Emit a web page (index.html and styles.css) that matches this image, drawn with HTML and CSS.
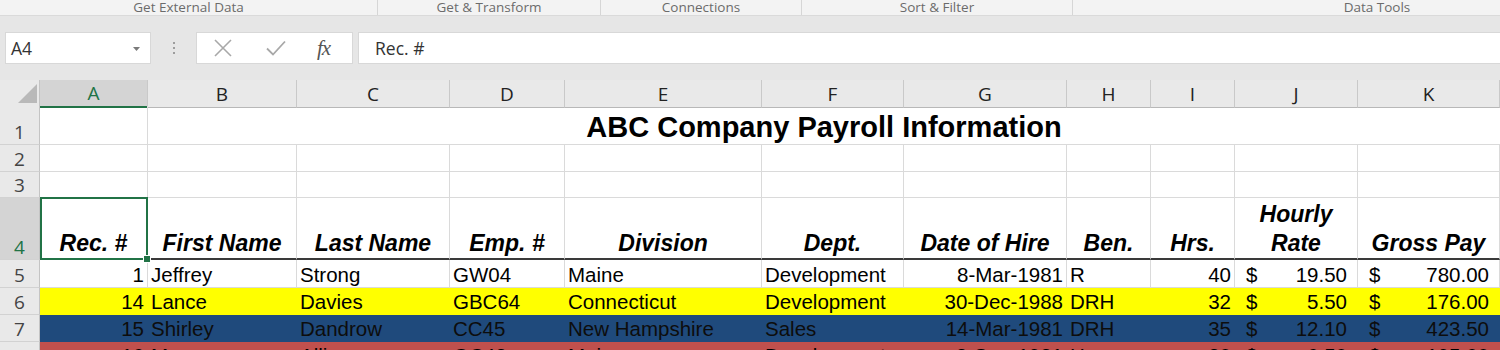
FILE: index.html
```html
<!DOCTYPE html>
<html>
<head>
<meta charset="utf-8">
<link rel="stylesheet" href="styles.css">
</head>
<body>
<div class="ribbon">
  <div class="grp g1">Get External Data</div>
  <div class="grp g2">Get &amp; Transform</div>
  <div class="grp g3">Connections</div>
  <div class="grp g4">Sort &amp; Filter</div>
  <div class="grp g5">Data Tools</div>
</div>
<div class="band"></div>
<div class="fbar">
  <div class="namebox"><span>A4</span><svg class="caret" width="7" height="4" viewBox="0 0 7 4"><path d="M0 0H7L3.5 4Z" fill="#7a7a7a"/></svg></div>
  <div class="grip"><i></i><i></i><i></i></div>
  <div class="fbtns">
    <svg class="ico" width="18" height="18" viewBox="0 0 18 18"><path d="M1 1L17 17M17 1L1 17" stroke="#a8a8a8" stroke-width="1.6" fill="none"/></svg>
    <svg class="ico" width="20" height="16" viewBox="0 0 20 16"><path d="M1 8.5L7 14.5L19 1.5" stroke="#a8a8a8" stroke-width="1.8" fill="none"/></svg>
    <span class="fx">fx</span>
  </div>
  <div class="finput">Rec. #</div>
</div>
<div class="band2"></div>
<div class="sheet">
  <div class="row rhdr">
    <div class="corner"><svg width="19" height="19" viewBox="0 0 19 19"><path d="M19 0V19H0Z" fill="#b9b9b9"/></svg></div>
    <div class="ch sel">A</div><div class="ch">B</div><div class="ch">C</div><div class="ch">D</div><div class="ch">E</div><div class="ch">F</div><div class="ch">G</div><div class="ch">H</div><div class="ch">I</div><div class="ch">J</div><div class="ch">K</div>
  </div>
  <div class="row r1">
    <div class="rh">1</div><div class="c"></div><div class="c title">ABC Company Payroll Information</div>
  </div>
  <div class="row r2">
    <div class="rh">2</div><div class="c"></div><div class="c"></div><div class="c"></div><div class="c"></div><div class="c"></div><div class="c"></div><div class="c"></div><div class="c"></div><div class="c"></div><div class="c"></div><div class="c"></div>
  </div>
  <div class="row r3">
    <div class="rh">3</div><div class="c"></div><div class="c"></div><div class="c"></div><div class="c"></div><div class="c"></div><div class="c"></div><div class="c"></div><div class="c"></div><div class="c"></div><div class="c"></div><div class="c"></div>
  </div>
  <div class="row r4">
    <div class="rh sel">4</div>
    <div class="c h active">Rec. #<div class="selbox"></div><div class="handle"></div></div>
    <div class="c h">First Name</div><div class="c h">Last Name</div><div class="c h">Emp. #</div><div class="c h">Division</div><div class="c h">Dept.</div><div class="c h">Date of Hire</div><div class="c h">Ben.</div><div class="c h">Hrs.</div><div class="c h">Hourly<br>Rate</div><div class="c h">Gross Pay</div>
  </div>
  <div class="row r5">
    <div class="rh">5</div>
    <div class="c num">1</div><div class="c">Jeffrey</div><div class="c">Strong</div><div class="c">GW04</div><div class="c">Maine</div><div class="c">Development</div><div class="c num">8-Mar-1981</div><div class="c">R</div><div class="c num">40</div><div class="c acct"><span>$</span><span>19.50</span></div><div class="c acct"><span>$</span><span>780.00</span></div>
  </div>
  <div class="row r6 yellow">
    <div class="rh">6</div>
    <div class="c num">14</div><div class="c">Lance</div><div class="c">Davies</div><div class="c">GBC64</div><div class="c">Connecticut</div><div class="c">Development</div><div class="c num">30-Dec-1988</div><div class="c">DRH</div><div class="c num">32</div><div class="c acct"><span>$</span><span>5.50</span></div><div class="c acct"><span>$</span><span>176.00</span></div>
  </div>
  <div class="row r7 blue">
    <div class="rh">7</div>
    <div class="c num">15</div><div class="c">Shirley</div><div class="c">Dandrow</div><div class="c">CC45</div><div class="c">New Hampshire</div><div class="c">Sales</div><div class="c num">14-Mar-1981</div><div class="c">DRH</div><div class="c num">35</div><div class="c acct"><span>$</span><span>12.10</span></div><div class="c acct"><span>$</span><span>423.50</span></div>
  </div>
  <div class="row r8 red">
    <div class="rh">8</div>
    <div class="c num">16</div><div class="c">Mary</div><div class="c">Allison</div><div class="c">GC48</div><div class="c">Maine</div><div class="c">Development</div><div class="c num">3-Sep-1981</div><div class="c">H</div><div class="c num">30</div><div class="c acct"><span>$</span><span>6.50</span></div><div class="c acct"><span>$</span><span>195.00</span></div>
  </div>
</div>
</body>
</html>
```
FILE: styles.css
```css
html, body {
  margin: 0;
  padding: 0;
}
body {
  width: 1500px;
  height: 350px;
  overflow: hidden;
  background: #e6e6e6;
  font-family: "Open Sans", "Noto Sans", sans-serif;
}

/* ribbon group labels */
.ribbon {
  display: flex;
  height: 15px;
  background: #f3f3f3;
  border-bottom: 1px solid #dadada;
}
.grp {
  flex: none;
  height: 15px;
  box-sizing: border-box;
  text-align: center;
  font-size: 13.5px;
  line-height: 14px;
  color: #6b6b6b;
  border-right: 1px solid #d6d6d6;
  white-space: nowrap;
}
.g1 { width: 378px; }
.g2 { width: 223px; }
.g3 { width: 201px; }
.g4 { width: 271px; }
.g5 { flex: 1; padding-left: 181px; border-right: none; }

.band { height: 16px; }
.band2 { height: 16px; }

/* formula bar */
.fbar {
  display: flex;
  height: 32px;
  padding-left: 5px;
}
.namebox {
  width: 146px;
  box-sizing: border-box;
  background: #fff;
  border: 1px solid #d8d8d8;
  display: flex;
  align-items: center;
  justify-content: space-between;
  padding: 0 10px 0 5px;
  font-size: 17.5px;
  color: #333;
}
.caret { display: block; margin-top: 1px; }
.grip {
  width: 45px;
  display: flex;
  flex-direction: column;
  align-items: center;
  justify-content: center;
  gap: 3px;
}
.grip i {
  display: block;
  width: 2px;
  height: 2px;
  background: #9d9d9d;
}
.fbtns {
  width: 157px;
  box-sizing: border-box;
  background: #fff;
  border: 1px solid #d8d8d8;
  display: flex;
  align-items: center;
  padding-left: 17px;
}
.fbtns .ico { display: block; flex: none; }
.fbtns .ico:nth-child(2) { margin-left: 34px; }
.fx {
  margin-left: 31px;
  font-family: "Liberation Serif", "DejaVu Serif", serif;
  font-style: italic;
  font-size: 21px;
  color: #555;
  letter-spacing: -1px;
}
.finput {
  flex: 1;
  margin-left: 5px;
  background: #fff;
  border: 1px solid #d8d8d8;
  border-right: none;
  display: flex;
  align-items: center;
  padding-left: 16px;
  font-size: 17.5px;
  color: #333;
}

/* sheet */
.sheet {
  background: #fff;
  font-family: "Liberation Sans", Arial, sans-serif;
  font-size: 20.5px;
  color: #000;
}
.row {
  display: grid;
  grid-template-columns: 40px 108px 149px 153px 115px 197px 142px 163px 84px 84px 123px 142px;
}
.rhdr { height: 26px; }
.r1 { height: 39px; }
.r2 { height: 27px; }
.r3 { height: 26px; }
.r4 { height: 62px; }
.r5 { height: 28px; }
.r6 { height: 27px; }
.r7 { height: 27px; }
.r8 { height: 27px; }

.corner {
  background: #e9e9e9;
  border-right: 1px solid #c4c4c4;
  border-bottom: 1px solid #b8b8b8;
  display: flex;
  align-items: flex-end;
  justify-content: flex-end;
  padding: 0 2px 4px 0;
}
.corner svg { display: block; }
.ch {
  background: #e9e9e9;
  border-right: 1px solid #c9c9c9;
  border-bottom: 1px solid #b8b8b8;
  display: flex;
  align-items: center;
  justify-content: center;
  font-family: "Open Sans", "Noto Sans", sans-serif;
  font-size: 19px;
  color: #222;
}
.ch.sel {
  background: #d4d4d4;
  color: #217346;
  border-bottom: 2px solid #217346;
}
.rh {
  background: #e9e9e9;
  border-right: 1px solid #c4c4c4;
  border-bottom: 1px solid #d2d2d2;
  display: flex;
  align-items: flex-end;
  justify-content: center;
  padding-bottom: 1px;
  font-family: "Open Sans", "Noto Sans", sans-serif;
  font-size: 19px;
  line-height: 22px;
  color: #444;
}
.rh.sel {
  background: #d4d4d4;
  color: #217346;
}

.c {
  min-width: 0;
  border-right: 1px solid #dadada;
  border-bottom: 1px solid #dadada;
  display: flex;
  align-items: flex-end;
  padding: 0 3px 1px 3px;
  line-height: 23px;
  white-space: nowrap;
  overflow: hidden;
}
.c.num { justify-content: flex-end; }
.c.acct {
  justify-content: space-between;
  padding-left: 11px;
  padding-right: 10px;
}
.title {
  grid-column: span 10;
  justify-content: center;
  border-right: none;
  font-weight: bold;
  font-size: 29px;
  line-height: 33px;
  padding-bottom: 0;
}
.c.h {
  font-weight: bold;
  font-style: italic;
  font-size: 23px;
  line-height: 29px;
  justify-content: center;
  text-align: center;
  padding-bottom: 0;
  border-bottom: 2px solid #3a3a3a;
  white-space: normal;
}
.c.active {
  position: relative;
  overflow: visible;
}
.selbox {
  position: absolute;
  top: -1px;
  left: 0;
  right: -1px;
  bottom: -2px;
  border: 2px solid #217346;
}
.handle {
  position: absolute;
  right: -4px;
  bottom: -5px;
  width: 6px;
  height: 6px;
  background: #217346;
  border: 1px solid #fff;
  z-index: 2;
}

.yellow .c { background: #ffff00; border-color: #ffff00; }
.blue .c { background: #1f4a7c; border-color: #1f4a7c; color: #0d0d0d; }
.red .c { background: #c0504d; border-color: #c0504d; }
```
